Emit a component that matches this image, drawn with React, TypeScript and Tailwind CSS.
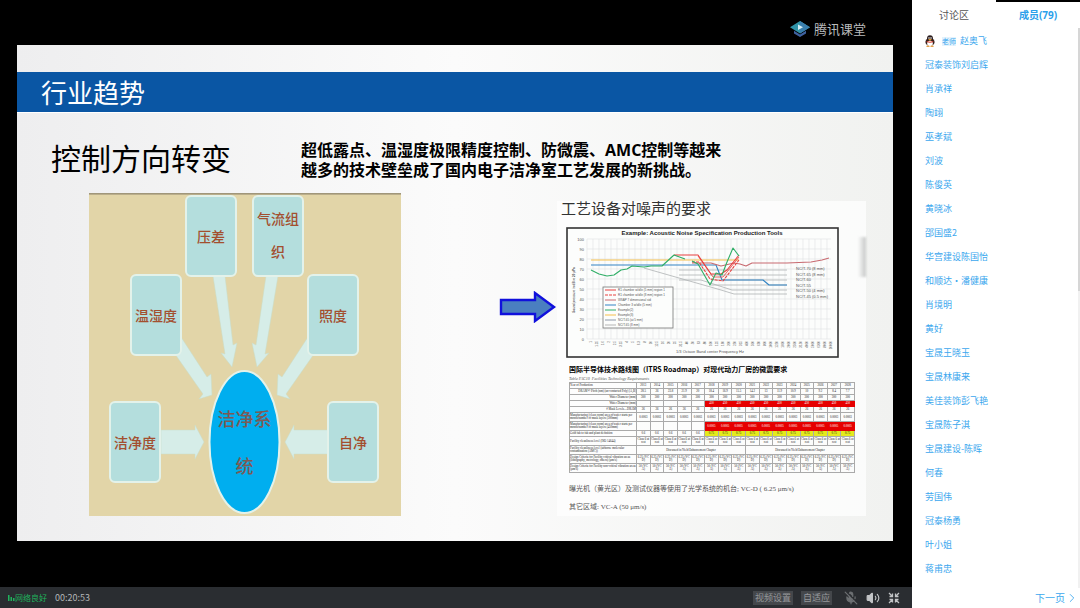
import { ChevronRight, MicOff, Volume2 } from "lucide-react";
import clsx from "clsx";

const members = [
  "冠泰装饰刘启辉",
  "肖承祥",
  "陶翊",
  "巫孝斌",
  "刘波",
  "陈俊英",
  "黄晓冰",
  "邵国盛2",
  "华宫建设陈国怡",
  "和顺达·潘健康",
  "肖境明",
  "黄好",
  "宝晟王晓玉",
  "宝晟林康来",
  "美佳装饰彭飞艳",
  "宝晟陈子淇",
  "宝晟建设-陈晖",
  "何春",
  "劳国伟",
  "冠泰杨勇",
  "叶小姐",
  "蒋甫忠",
];

const boxes = [
  { x: 97, y: 3, lines: ["压差"] },
  { x: 164, y: 3, lines: ["气流组", "织"] },
  { x: 42, y: 82, lines: ["温湿度"] },
  { x: 219, y: 82, lines: ["照度"] },
  { x: 21, y: 209, lines: ["洁净度"] },
  { x: 239, y: 209, lines: ["自净"] },
];

const arrows = [
  "124,83 136,83 144,152 148,150 143,174 132,160 136,161",
  "189,83 177,83 167,152 163,150 168,174 180,160 176,161",
  "92,144 118,184 122,181 123,202 110,206 114,201 86,161",
  "219,144 193,184 189,181 188,202 201,206 197,201 225,161",
  "72,237 106,237 106,232 115,249 106,266 106,261 72,261",
  "239,237 205,237 205,232 196,249 205,266 205,261 239,261",
];

const FactorDiagram = () => (
  <svg
    viewBox="0 0 312 323"
    className="w-[312px] shrink-0 bg-[#e2d5a8]"
    fontFamily='"Noto Sans CJK SC", sans-serif'
    fill="#a34f2f"
    textAnchor="middle"
  >
    <rect width="312" height="1.6" fill="#a0967a" />
    {arrows.map((points) => (
      <polygon key={points} points={points} fill="#d6ede8" stroke="#c9dcc9" strokeWidth="0.5" />
    ))}
    {boxes.map((box) => (
      <g key={box.lines[0]}>
        <rect
          x={box.x}
          y={box.y}
          width="50"
          height="80"
          rx="5"
          fill="#b4dedd"
          stroke="#e3f2ea"
          strokeWidth="2"
        />
        {box.lines.map((line, i) => (
          <text
            key={line}
            x={box.x + 25}
            y={box.y + (box.lines.length > 1 ? 28 + i * 33 : 46)}
            fontSize="14"
            fontWeight="500"
          >
            {line}
          </text>
        ))}
      </g>
    ))}
    <ellipse cx="155.5" cy="249" rx="35" ry="71" fill="#00aeef" stroke="#e3f2ea" strokeWidth="2" />
    <g fontSize="18" fontWeight="500" fill="#7d5a55">
      <text x="155.5" y="233">洁净系</text>
      <text x="155.5" y="280">统</text>
    </g>
  </svg>
);

const legend = [
  { label: "R1 chamber w/idle (5 mm) region 1", color: "#e8413f" },
  { label: "R1 chamber w/idle (8 mm) region 1", color: "#e8413f", dash: "3 1" },
  { label: "WSAP 7 dimensional std", color: "#c86a70" },
  { label: "Chamber 3 w/idle (5 mm)", color: "#3284c4" },
  { label: "Example(2)", color: "#2fae66" },
  { label: "Example(3)", color: "#f6bf4a" },
  { label: "NC/T-65 (at 5 mm)", color: "#8d98a8" },
  { label: "NC/T-65 (8 mm)", color: "#b5b5b5" },
];

const seriesLabels = [
  "NC/T-70 (8 mm)",
  "NC/T-65 (8 mm)",
  "NC/T-60",
  "NC/T-55",
  "NC/T-50 (4 mm)",
  "NC/T-45 (0.5 mm)",
];

const frequencies = [
  "1", "1.25", "1.6", "2", "2.5", "3.15", "4", "5", "6.3", "8", "10", "12.5", "16", "20",
  "25", "31.5", "40", "50", "63", "80", "100", "125", "160", "200", "250", "315", "400",
  "500", "630", "800", "1000", "1250", "1600", "2000", "2500", "3150", "4000", "5000",
  "6300", "8000", "10000",
];

const NoiseChart = () => (
  <svg
    viewBox="0 0 273 131"
    className="ml-[9px] w-[273px]"
    fontFamily='"Liberation Sans", sans-serif'
    fontSize="4"
    fill="#555"
  >
    <rect x="1" y="1" width="271" height="129" fill="#fcfdfc" stroke="#333" strokeWidth="1.6" />
    <text x="136" y="8" fontSize="6" fontWeight="700" fill="#222" textAnchor="middle">
      Example: Acoustic Noise Specification Production Tools
    </text>

    {/* grid */}
    <g stroke="#dfe3e2" strokeWidth="0.6">
      {frequencies.map((f, i) => (
        <line key={f} x1={21 + i * 6} x2={21 + i * 6} y1="12" y2="112" />
      ))}
      {Array.from({ length: 11 }, (_, i) => (
        <line key={i} x1="21" x2="265" y1={12 + i * 10} y2={12 + i * 10} />
      ))}
    </g>
    {Array.from({ length: 11 }, (_, i) => (
      <text key={i} x="18" y={14 + i * 10} textAnchor="end">
        {100 - i * 10}
      </text>
    ))}
    {frequencies.map((f, i) => (
      <text key={f} textAnchor="end" transform={`translate(${26 + i * 6} 114) rotate(-90)`} fontSize="3">
        {f}
      </text>
    ))}
    <text x="144" y="126" textAnchor="middle">
      1/3 Octave Band center Frequency Hz
    </text>
    <text transform="translate(9 63) rotate(-90)" textAnchor="middle" fontWeight="700" fontSize="3">
      Sound pressure in dB re 20 µPa
    </text>

    <g fill="none" stroke="#aeb2b4" strokeWidth="0.8">
      <path d="M113 43H221M113 48H221M145 53H221M145 58H221" />
      <path d="M113 53H135L166 63H221" />
      <path d="M78 41L155 63L168 67H221" />
    </g>
    <g fill="none" strokeWidth="1.1" strokeLinejoin="round">
      <path d="M25 33H173" stroke="#f6bf4a" />
      <path d="M25 38H150L156 53H197L203 58H221" stroke="#3284c4" />
      <path d="M126 36H145L155 39L168 36L174 37L180 39L186 36H221L245 35L256 33L263 31" stroke="#c86a70" />
      <path d="M108 28H132L145 47H155L161 43L173 28" stroke="#e8413f" />
      <path d="M126 35H133L144 52L157 54L173 33" stroke="#e8413f" strokeDasharray="3 1" />
      <path d="M132 29L147 50L157 50L173 30" stroke="#e8413f" strokeWidth="0.8" />
      <path
        d="M25 43L33 47L41 49L48 48L55 43L61 42L66 39L78 40L85 39H96L108 28L119 32M126 34L132 37L144 58L150 46L156 48L161 35L167 21L173 29"
        stroke="#2fae66"
      />
    </g>

    {seriesLabels.map((label, i) => (
      <text key={label} x="230" y={43 + i * 5.5}>
        {label}
      </text>
    ))}
    <rect x="37" y="60" width="70" height="41" fill="#fcfdfc" stroke="#777" strokeWidth="0.8" />
    {legend.map((item, i) => (
      <g key={item.label}>
        <line
          x1="39"
          x2="50"
          y1={63 + i * 5}
          y2={63 + i * 5}
          stroke={item.color}
          strokeDasharray={item.dash}
        />
        <text x="52" y={64 + i * 5} fontSize="3">
          {item.label}
        </text>
      </g>
    ))}
  </svg>
);

const columns = Array.from({ length: 16 }, (_, i) => i);
const years = [
  "2013", "2014", "2015", "2016", "2017", "2018", "2019", "2020",
  "2021", "2022", "2023", "2024", "2025", "2026", "2027", "2028",
];
const pitch = [
  "28.5", "26", "23.8", "21.9", "20", "18.4", "16.9", "15.5",
  "14.2", "13", "11.9", "10.9", "10", "9.2", "8.4", "7.7",
];

const late = (value: string) => columns.map((i) => (i < 5 ? "" : value));
const all = (value: string) => columns.map(() => value);

type Row = { label: string; values: string[]; right?: boolean; tall?: boolean; tone?: "red" | "yellow" };

const topRows: Row[] = [
  { label: "Year of Production", values: years },
  { label: "DRAM ½ Pitch (nm) (un-contacted Poly) [A,B]", values: pitch, right: true },
  { label: "Wafer Diameter (mm)", values: all("300"), right: true },
  { label: "Wafer Diameter (mm)", values: late("450"), right: true, tone: "red" },
  { label: "# Mask Levels—DRAM", values: all("26"), right: true },
  {
    label: "Manufacturing (clean room) area of/wafer starts per month/number of mask layers (300mm)",
    values: all("0.0003"),
    tall: true,
  },
  {
    label: "Manufacturing (clean room) area of/wafer starts per month/number of mask layers (450mm)",
    values: late("0.0005"),
    tall: true,
    tone: "red",
  },
  {
    label: "Gold fab to fab and plant definition",
    values: columns.map((i) => (i < 5 ? "0.6" : "0.75")),
    tone: "yellow",
  },
  { label: "Facility cleanliness level (ISO 14644)", values: all("Class 6 at rest"), tall: true },
];

const bottomRows: Row[] = [
  {
    label: "Design Criteria for Facility critical vibration areas (lithography, metrology, others) (µm/s)",
    values: all("6.25 (VC D)"),
    tall: true,
  },
  {
    label: "Design Criteria for Facility non-critical vibration areas (µm/s)",
    values: all("50 (VC A)"),
    tall: true,
  },
];

const TableRow = ({ row }: { row: Row }) => (
  <tr className={row.tall ? "h-[9px]" : "h-[6px]"}>
    <th
      scope="row"
      className={clsx("border border-[#aaa] p-0 font-normal", row.right ? "text-right" : "text-left")}
    >
      {row.label}
    </th>
    {row.values.map((value, i) => (
      <td
        key={i}
        className={clsx(
          "border border-[#aaa] p-0",
          i >= 5 && row.tone === "red" && "border-[#e60000] bg-[#e60000] text-white",
          i >= 5 && row.tone === "yellow" && "bg-[#e4ea1c]"
        )}
      >
        {value}
      </td>
    ))}
  </tr>
);

const RoadmapTable = () => (
  <table className="ml-3 w-[286px] table-fixed border-collapse text-center font-['Liberation_Serif',serif] text-[3px]/[3px] text-[#222]">
    <caption className="text-left text-[4px]/[7px] italic text-[#555]">
      Table FAC10 &nbsp;Facilities Technology Requirements
    </caption>
    <colgroup>
      <col className="w-[67px]" />
      {columns.map((i) => (
        <col key={i} />
      ))}
    </colgroup>
    <tbody>
      {topRows.map((row, i) => (
        <TableRow key={i} row={row} />
      ))}
      <tr className="h-[9px]">
        <th scope="row" className="border border-[#aaa] p-0 text-left font-normal">
          Facility cleanliness level (airborne molecular contamination (AMC))
        </th>
        <td colSpan={8} className="border border-[#aaa] p-0">
          Discussed in Yield Enhancement Chapter
        </td>
        <td colSpan={8} className="border border-[#aaa] p-0">
          Discussed in Yield Enhancement Chapter
        </td>
      </tr>
      {bottomRows.map((row) => (
        <TableRow key={row.label} row={row} />
      ))}
    </tbody>
  </table>
);

const Slide = () => (
  <article className="mr-[19px] ml-[17px] bg-linear-to-r from-[#eeeeef] via-[#fbfbfb] to-[#f1f2f0] pt-[27px] pb-[25px] text-black">
    <h1 className="border-b border-white bg-[#0a56a4] pl-6 text-[26px]/[40px] text-white">行业趋势</h1>
    <div className="flex items-start pt-[27px] pl-[34px]">
      <h2 className="w-[250px] shrink-0 text-[30px]/[34px]">控制方向转变</h2>
      <p className="pb-[13px] font-['Open_Sans','Noto_Sans_CJK_SC',sans-serif] text-[16px]/[20px] font-bold">
        超低露点、温湿度极限精度控制、防微震、AMC控制等越来
        <br />
        越多的技术壁垒成了国内电子洁净室工艺发展的新挑战。
      </p>
    </div>
    <div className="flex items-start pl-[72px]">
      <FactorDiagram />
      <svg viewBox="0 0 58 32" className="mt-[98px] ml-[98px] w-[58px] shrink-0">
        <path
          d="M2 9H36V2L55 16L36 30V23H2Z"
          fill="#4a7fc0"
          stroke="#1010dc"
          strokeWidth="2.4"
        />
      </svg>
      <figure className="relative mt-2 mr-[27px] min-w-0 flex-1 bg-white/70">
        <figcaption className="pb-3 pl-1 text-[15px]/[14px] text-[#333]">工艺设备对噪声的要求</figcaption>
        <NoiseChart />
        <h3 className="mt-[5px] ml-3 text-[7px]/[12px] font-bold whitespace-nowrap">
          国际半导体技术路线图（ITRS Roadmap）对现代动力厂房的微震要求
        </h3>
        <RoadmapTable />
        <p className="mt-[7px] ml-3 font-['Liberation_Serif','Noto_Sans_CJK_SC',serif] text-[7px]/[18px] whitespace-nowrap text-[#555]">
          曝光机（黄光区）及测试仪器等使用了光学系统的机台; VC-D ( 6.25 μm/s)
          <br />
          其它区域: VC-A (50 μm/s)
        </p>
        <span className="absolute top-9 right-0 h-10 w-2 bg-linear-to-r from-transparent to-[#c4c6c5] blur-[1px]" />
      </figure>
    </div>
  </article>
);

const ClassroomLogo = () => (
  <svg viewBox="0 0 20 20" className="h-[18px] w-5" preserveAspectRatio="none">
    <path d="M4 12L10 16L16 12V15L10 19L4 15Z" fill="#3f62a0" />
    <path d="M0 8L10 1L20 8L10 15Z" fill="#2f93a8" />
    <path d="M10 1L20 8L10 15Z" fill="#3a7fae" />
    <path d="M8 5L13 8L8 11Z" fill="#d5eef5" />
  </svg>
);

const Penguin = () => (
  <svg viewBox="0 0 10 12" className="w-[10px]">
    <ellipse cx="5" cy="7" rx="4.6" ry="4" fill="#3a2320" />
    <ellipse cx="5" cy="3.6" rx="3" ry="3.4" fill="#2b1d1d" />
    <ellipse cx="5" cy="8.4" rx="2.8" ry="2.6" fill="#fff" />
    <circle cx="4" cy="3" r="0.8" fill="#fff" />
    <circle cx="6" cy="3" r="0.8" fill="#fff" />
    <ellipse cx="5" cy="4.7" rx="1.7" ry="0.7" fill="#f2a531" />
    <path d="M1.8 6Q5 7.6 8.2 6V7Q5 8.4 1.8 7Z" fill="#dd3b2b" />
    <ellipse cx="3" cy="11.2" rx="1.8" ry="0.8" fill="#e39a3a" />
    <ellipse cx="7" cy="11.2" rx="1.8" ry="0.8" fill="#e39a3a" />
  </svg>
);

const PlayerBar = () => (
  <footer className="mt-auto flex items-center bg-[#2a2d31] px-2 py-[3px] text-[9px]/[15px] text-[#b4b6b8]">
    <svg viewBox="0 0 7 7" className="w-[7px] fill-[#1fb35c]">
      <path d="M0 1H1.5V7H0ZM2.5 3H4V7H2.5ZM5 4H6.5V7H5Z" />
    </svg>
    <span className="text-[8px] text-[#1fb35c]">网络良好</span>
    <span className="ml-2">00:20:53</span>
    <div className="ml-auto flex items-center gap-2 pr-1">
      <button className="bg-[#44474b] px-[2px] text-[9px]/[14px] text-[#96989b]">视频设置</button>
      <button className="bg-[#44474b] px-[2px] text-[9px]/[14px] text-[#96989b]">自适应</button>
      <button aria-label="麦克风" className="ml-1 text-[#6d7073]">
        <MicOff className="h-[14px] w-[14px] fill-current" />
      </button>
      <button aria-label="音量" className="text-[#c2c4c6]">
        <Volume2 className="h-[14px] w-[14px] [&>path:first-child]:fill-current" />
      </button>
      <button aria-label="退出全屏" className="text-[#c2c4c6]">
        <svg viewBox="0 0 12 12" className="h-3 w-3 fill-none stroke-current">
          <path
            d="M1 1L4 4M11 1L8 4M1 11L4 8M11 11L8 8M1.5 4.5H4.5V1.5M10.5 4.5H7.5V1.5M1.5 7.5H4.5V10.5M10.5 7.5H7.5V10.5"
            strokeWidth="1.3"
          />
        </svg>
      </button>
    </div>
  </footer>
);

const MemberPanel = () => (
  <aside className="flex w-[168px] shrink-0 flex-col bg-white text-[#3ba7ee]">
    <nav className="grid grid-cols-2 text-[10px]/[26px]">
      <button className="border-t-2 border-white text-[#555]">讨论区</button>
      <button className="border-t-2 border-black font-['Open_Sans','Noto_Sans_CJK_SC',sans-serif] font-bold text-[#2ba0ea]">
        成员(79)
      </button>
    </nav>
    <div className="flex flex-1">
      <ul className="flex-1 pt-px pl-[13px] text-[9px]/[24px]">
        <li className="flex items-center">
          <Penguin />
          <span className="mr-1 ml-[7px] bg-[#e3f3fd] text-[7px]/[9px]">老师</span>
          赵奥飞
        </li>
        {members.map((name) => (
          <li key={name}>{name}</li>
        ))}
      </ul>
      <div className="w-[2px] bg-[#f1f1f1]">
        <div className="h-[47%] bg-[#d6d6d6]" />
      </div>
    </div>
    <a href="#next" className="flex items-center justify-end pr-px text-[10px]/[20px]">
      下一页
      <ChevronRight className="h-[14px] w-[14px]" strokeWidth={1.5} />
    </a>
  </aside>
);

export default function App() {
  return (
    <div className="flex min-h-screen bg-black font-['Noto_Sans_CJK_SC',sans-serif]">
      <main className="flex min-w-0 flex-1 flex-col">
        <header className="flex items-center justify-end gap-1 pt-5 pr-[46px] pb-[7px] text-[13px]/[18px] text-[#b9bbbc]">
          <ClassroomLogo />
          腾讯课堂
        </header>
        <Slide />
        <PlayerBar />
      </main>
      <MemberPanel />
    </div>
  );
}
